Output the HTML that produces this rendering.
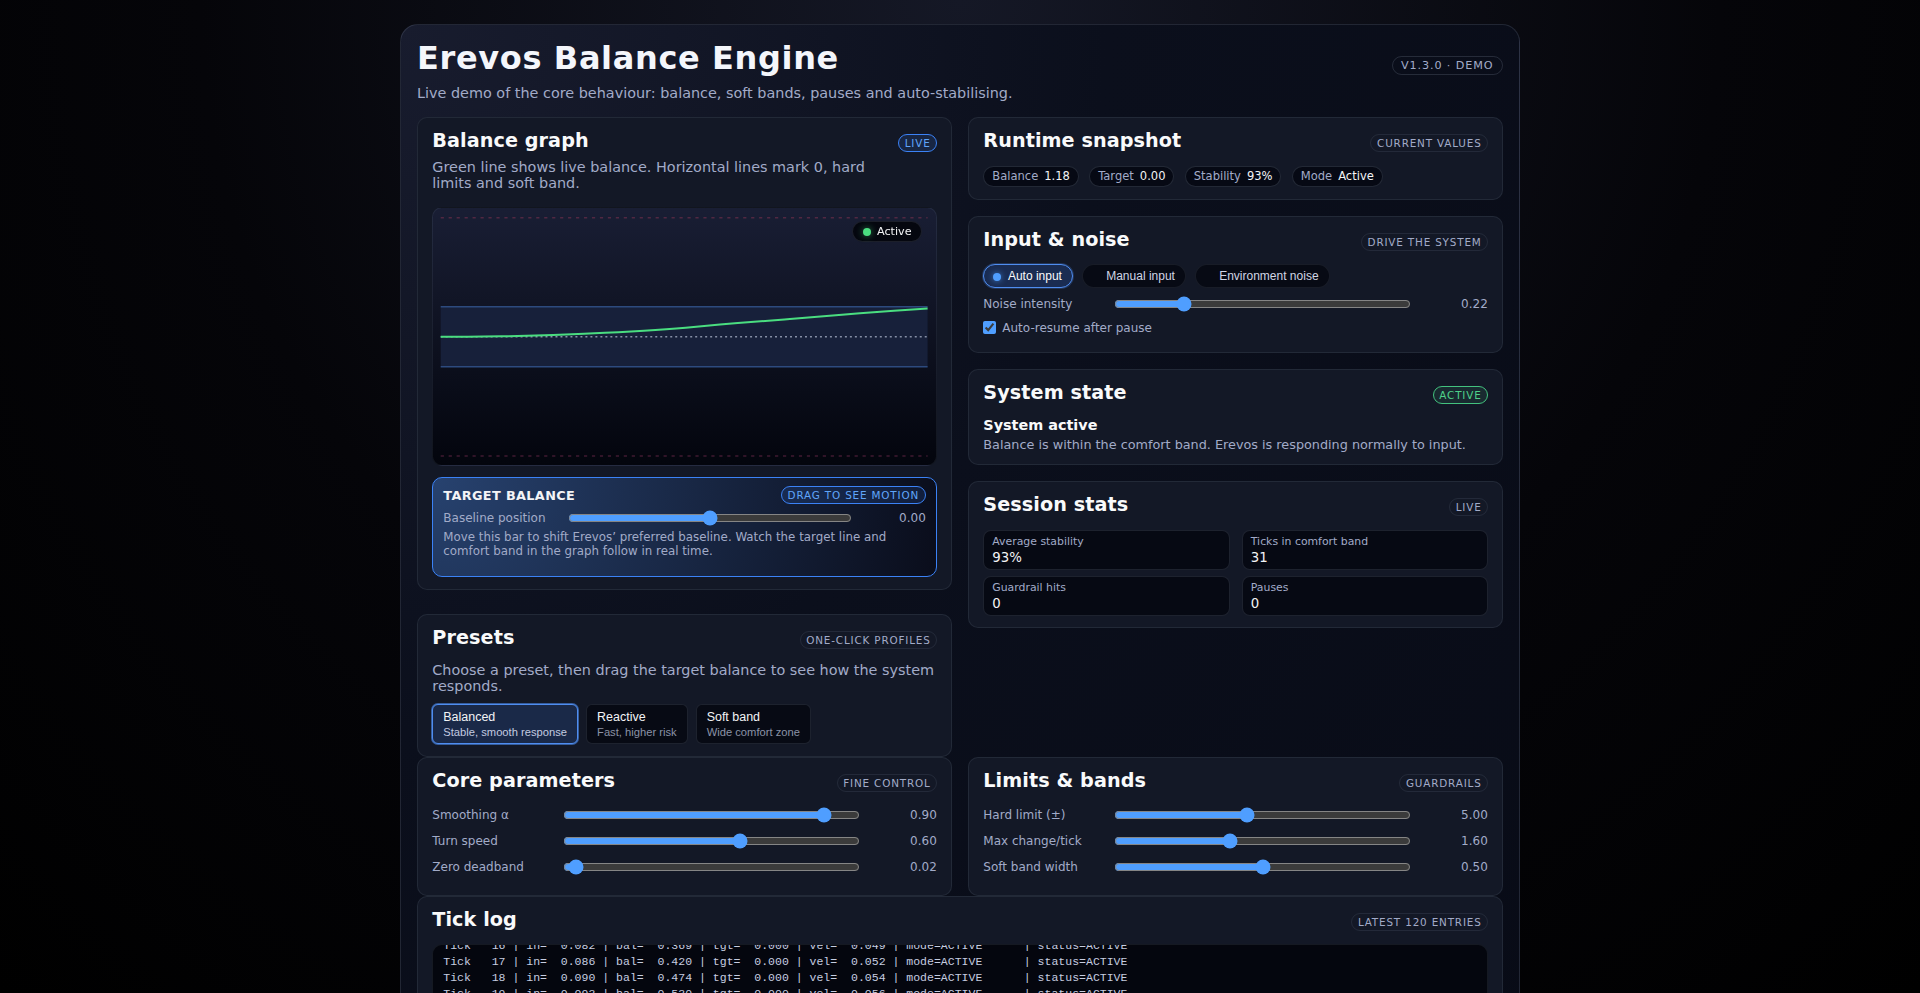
<!DOCTYPE html>
<html lang="en">
<head>
<meta charset="utf-8">
<title>Erevos Balance Engine</title>
<style>
:root{color-scheme:dark;}
*{box-sizing:border-box;}
html,body{margin:0;padding:0;}
body{
  width:1920px;height:993px;overflow:hidden;position:relative;
  font-family:"DejaVu Sans","Liberation Sans",sans-serif;
  color:#e5e7eb;
  background:radial-gradient(circle at 50% 0%, #151826 0, #050509 55%, #000 100%);
}
.app{
  position:absolute;left:400px;top:24px;width:1120px;height:1100px;
  border-radius:18px;border:1px solid rgba(148,163,184,0.18);
  background:radial-gradient(circle at 0% 0%, #181c2e 0, #0b0f1c 45%, #080b16 100%);
}
h1{position:absolute;left:16px;top:14px;margin:0;font-size:32px;font-weight:700;letter-spacing:0.02em;line-height:38px;color:#f4f6fb;white-space:nowrap;}
.sub{position:absolute;left:16px;top:59px;margin:0;font-size:14.4px;line-height:18px;color:#a2abc8;white-space:nowrap;}
.badge{
  display:inline-block;font-size:10.4px;letter-spacing:0.08em;text-transform:uppercase;
  padding:2px 5.7px;border-radius:999px;border:1px solid rgba(148,163,184,0.13);color:#a2abc8;line-height:12.1px;white-space:nowrap;
}
.badge.blue{border-color:#3b82f6;color:#60a5fa;background:rgba(59,130,246,0.14);}
.badge.green{border-color:#43c27e;color:#4fd18b;background:rgba(79,209,139,0.10);}
.ver{position:absolute;right:16.5px;top:30.8px;font-size:11.2px;padding:2px 8px;line-height:13.2px;border-color:rgba(148,163,184,0.2);}
.card{
  position:absolute;border-radius:10px;border:1px solid rgba(148,163,184,0.12);
  background:#131826;padding:11px 14px 14px;
}
.card h2{margin:0;font-size:19.2px;font-weight:700;line-height:23px;letter-spacing:0.08px;color:#f9fafb;white-space:nowrap;}
.card .hd{display:flex;justify-content:space-between;align-items:flex-start;height:26px;}
.card .hd .badge{margin-top:4.5px;}
.desc{margin:4px 0 0;font-size:14.4px;line-height:16px;color:#a2abc8;}
input[type=range]{accent-color:#4f9eff;margin:0;display:block;height:16px;}
input[type=checkbox]{accent-color:#4f9eff;margin:0;width:13px;height:13px;display:block;}
.row{display:flex;align-items:center;height:16px;font-size:12px;color:#a2abc8;}
.row .lbl{width:131px;flex:none;white-space:nowrap;}
.row input{width:297px;flex:none;}
.row .val{flex:1;text-align:right;color:#a2abc8;padding-right:0.5px;}
.rows .row{margin-top:10px;}
/* graph */
.gwrap{position:absolute;left:14px;top:88.4px;width:505px;height:259.6px;border-radius:10px;border:1px solid rgba(148,163,184,0.1);
  background:linear-gradient(180deg,#191e34 0%,#03050d 100%);overflow:hidden;}
.gwrap svg{position:absolute;left:0;top:0.85px;}
.gpill{position:absolute;right:14.4px;top:13.2px;height:21px;border-radius:999px;background:#05070f;transform:translateZ(0);border:1px solid rgba(148,163,184,0.16);padding:1.4px 9.3px 0 9.9px;font-size:11.2px;line-height:17.6px;color:#f3f4f6;display:flex;align-items:center;}
.gpill i{display:block;width:8px;height:8px;border-radius:50%;background:#4ade80;margin-right:5.7px;box-shadow:0 0 7px rgba(74,222,128,0.55);}
.tb{position:absolute;left:14px;top:358.75px;width:505px;height:100.1px;border-radius:10px;border:1px solid #3b82f6;
  background:radial-gradient(circle farthest-corner at 0% 0%, #27426f 0%, #0a0d1b 100%);padding:9.65px 10px 9px;}
.tb .t{font-size:12.8px;font-weight:700;letter-spacing:0.03em;color:#f3f4f6;text-transform:uppercase;line-height:16px;}
.tb .hd2{display:flex;justify-content:space-between;align-items:flex-start;height:17px;}
.tb .hd2 .badge{margin-top:-1.8px;margin-right:0.7px;padding:2px 5.6px;line-height:12.5px;}
.tb .t{margin-top:0.5px;}
.tb .row{margin-top:5.35px;}
.tb .row .lbl{width:125px;}
.tb .row input{width:284px;}
.tb .help{margin:4px 0 0;font-size:11.84px;line-height:14px;color:#a2abc8;}
/* presets */
.pbtns{display:flex;gap:8px;margin-top:10px;}
.pbtn{font-family:"Liberation Sans",sans-serif;border:1px solid rgba(148,163,184,0.16);background:#070a14;border-radius:6px;padding:4px 10px 4px;height:40px;color:#e5e7eb;}
.pbtn b{display:block;font-weight:400;font-size:12.48px;line-height:16px;color:#f3f4f6;}
.pbtn span{display:block;font-size:11.2px;line-height:14px;color:#8b93a7;white-space:nowrap;}
.pbtn.on{border:1px solid #4f8df0;box-shadow:0 0 0 1px rgba(79,141,240,0.6);background:#1a2948;}
.pbtn.on span{color:#c3cbe0;}
/* chips */
.chips{display:flex;gap:10.3px;margin-top:10.25px;}
.chip{height:21px;border-radius:999px;background:#060914;border:1px solid rgba(148,163,184,0.2);padding:0 8px;font-size:11.52px;line-height:19px;color:#a2abc8;white-space:nowrap;}
.chip b{font-weight:400;color:#f3f4f6;margin-left:6px;}
.modes{display:flex;gap:8.5px;margin-top:10px;}
.mode{font-family:"Liberation Sans",sans-serif;height:23.8px;border-radius:999px;background:#070a14;border:1px solid rgba(148,163,184,0.12);padding:1px 10.2px 0 9.2px;font-size:12px;line-height:21.8px;color:#d1d5e4;display:flex;align-items:center;white-space:nowrap;}
.mode i{display:block;width:8px;height:8px;border-radius:50%;margin-right:6.4px;background:transparent;}
.mode.on{background:#1a2c52;border:1px solid #4f8df0;box-shadow:0 0 0 1px rgba(79,141,240,0.25);color:#f9fafb;}
.mode.on i{background:#4f9eff;box-shadow:0 0 6px rgba(79,158,255,0.7);}
.chk{display:flex;align-items:center;margin-top:7.7px;font-size:12px;color:#a2abc8;height:16px;}
.chk input{margin-right:6px;}
.stats{display:grid;grid-template-columns:1fr 1fr;gap:6px 12px;margin-top:10.3px;}
.stat{height:40px;border-radius:8px;background:#060913;border:1px solid rgba(148,163,184,0.17);padding:4px 8px;}
.stat .l{font-size:10.88px;line-height:14px;color:#a2abc8;}
.stat .v{font-size:13.3px;line-height:16px;color:#f3f4f6;margin-top:1px;}
.log{position:absolute;left:14px;top:47px;width:1056px;height:200px;border-radius:10px;background:#04060e;border:1px solid rgba(148,163,184,0.12);overflow:hidden;}
.log pre{margin:0;position:absolute;left:10px;top:-7px;font-family:"Liberation Mono","DejaVu Sans Mono",monospace;font-size:11.52px;line-height:16px;color:#c6cde0;}
</style>
</head>
<body>
<div class="app">
  <h1>Erevos Balance Engine</h1>
  <p class="sub">Live demo of the core behaviour: balance, soft bands, pauses and auto-stabilising.</p>
  <span class="badge ver">v1.3.0 · demo</span>
  <div style="position:absolute;left:0.3px;top:0.25px;">

  <div class="card" id="c-graph" style="left:16px;top:92px;width:535px;height:473px;">
    <div class="hd"><h2>Balance graph</h2><span class="badge blue">Live</span></div>
    <p class="desc" style="width:460px">Green line shows live balance. Horizontal lines mark 0, hard limits and soft band.</p>
    <div class="gwrap">
      <svg width="503" height="257" viewBox="0 0 503 257">
        <line x1="7.7" y1="9.75" x2="494.6" y2="9.75" stroke="#6a2d48" stroke-opacity="0.7" stroke-width="1.5" stroke-dasharray="3.2 4.76"/>
        <line x1="7.7" y1="248.0" x2="494.6" y2="248.0" stroke="#5a2440" stroke-opacity="0.7" stroke-width="1.5" stroke-dasharray="3.2 4.76"/>
        <rect x="7.7" y="98.8" width="486.9" height="59.9" fill="#17203a"/>
        <line x1="7.7" y1="98.8" x2="494.6" y2="98.8" stroke="#2d4a7e" stroke-width="1.6"/>
        <line x1="7.7" y1="158.7" x2="494.6" y2="158.7" stroke="#2d4a7e" stroke-width="1.6"/>
        <line x1="7.7" y1="128.75" x2="494.6" y2="128.75" stroke="#9aa3b8" stroke-opacity="0.85" stroke-width="1.5" stroke-dasharray="2 2.99"/>
        <path d="M7.70 128.75 C14.75 128.72 35.65 128.75 50.00 128.60 C64.35 128.45 79.98 128.19 93.80 127.85 C107.62 127.51 119.87 127.05 132.90 126.55 C145.93 126.05 158.98 125.50 172.00 124.85 C185.02 124.20 197.55 123.52 211.00 122.65 C224.45 121.78 237.07 120.92 252.70 119.65 C268.33 118.38 287.43 116.50 304.80 115.05 C322.17 113.60 339.54 112.35 356.90 110.95 C374.26 109.55 391.60 108.02 408.95 106.65 C426.30 105.28 446.73 103.77 461.00 102.75 C475.27 101.73 489.00 100.92 494.60 100.55" fill="none" stroke="#4ade80" stroke-width="2" stroke-linejoin="round" stroke-linecap="butt"/>
      </svg>
      <div class="gpill"><i></i>Active</div>
    </div>
    <div class="tb">
      <div class="hd2"><span class="t">Target balance</span><span class="badge blue">Drag to see motion</span></div>
      <div class="row"><span class="lbl">Baseline position</span><input type="range" min="-5" max="5" step="0.01" value="0"><span class="val">0.00</span></div>
      <p class="help">Move this bar to shift Erevos’ preferred baseline. Watch the target line and comfort band in the graph follow in real time.</p>
    </div>
  </div>

  <div class="card" id="c-presets" style="left:16px;top:589px;width:535px;height:142.75px;">
    <div class="hd"><h2>Presets</h2><span class="badge">One-click profiles</span></div>
    <p class="desc" style="margin-top:10px">Choose a preset, then drag the target balance to see how the system responds.</p>
    <div class="pbtns">
      <div class="pbtn on"><b>Balanced</b><span>Stable, smooth response</span></div>
      <div class="pbtn"><b>Reactive</b><span>Fast, higher risk</span></div>
      <div class="pbtn"><b>Soft band</b><span>Wide comfort zone</span></div>
    </div>
  </div>

  <div class="card" id="c-core" style="left:16px;top:731.65px;width:535px;height:139.2px;">
    <div class="hd"><h2>Core parameters</h2><span class="badge" style="margin-top:5.2px">Fine control</span></div>
    <div class="rows" style="margin-top:11.65px">
      <div class="row"><span class="lbl">Smoothing α</span><input type="range" min="0" max="1" step="0.01" value="0.9"><span class="val">0.90</span></div>
      <div class="row"><span class="lbl">Turn speed</span><input type="range" min="0" max="1" step="0.01" value="0.6"><span class="val">0.60</span></div>
      <div class="row"><span class="lbl">Zero deadband</span><input type="range" min="0" max="1" step="0.001" value="0.018"><span class="val">0.02</span></div>
    </div>
  </div>

  <div class="card" id="c-run" style="left:567px;top:92px;width:535px;height:83px;">
    <div class="hd"><h2>Runtime snapshot</h2><span class="badge">Current values</span></div>
    <div class="chips">
      <span class="chip">Balance<b>1.18</b></span><span class="chip">Target<b>0.00</b></span><span class="chip">Stability<b>93%</b></span><span class="chip">Mode<b>Active</b></span>
    </div>
  </div>

  <div class="card" id="c-input" style="left:567px;top:191px;width:535px;height:137px;">
    <div class="hd"><h2>Input &amp; noise</h2><span class="badge">Drive the system</span></div>
    <div class="modes">
      <div class="mode on"><i></i>Auto input</div><div class="mode"><i></i>Manual input</div><div class="mode"><i></i>Environment noise</div>
    </div>
    <div class="row" style="margin-top:8px"><span class="lbl">Noise intensity</span><input type="range" min="0" max="1" step="0.01" value="0.22"><span class="val">0.22</span></div>
    <div class="chk"><input type="checkbox" checked>Auto-resume after pause</div>
  </div>

  <div class="card" id="c-state" style="left:567px;top:344px;width:535px;height:96px;">
    <div class="hd"><h2>System state</h2><span class="badge green">Active</span></div>
    <div style="margin-top:9px;font-size:14.4px;font-weight:700;line-height:18px;color:#f9fafb">System active</div>
    <div style="margin-top:3px;font-size:12.8px;line-height:16px;color:#a2abc8">Balance is within the comfort band. Erevos is responding normally to input.</div>
  </div>

  <div class="card" id="c-stats" style="left:567px;top:456px;width:535px;height:147px;">
    <div class="hd"><h2>Session stats</h2><span class="badge">Live</span></div>
    <div class="stats">
      <div class="stat"><div class="l">Average stability</div><div class="v">93%</div></div>
      <div class="stat"><div class="l">Ticks in comfort band</div><div class="v">31</div></div>
      <div class="stat"><div class="l">Guardrail hits</div><div class="v">0</div></div>
      <div class="stat"><div class="l">Pauses</div><div class="v">0</div></div>
    </div>
  </div>

  <div class="card" id="c-limits" style="left:567px;top:731.65px;width:535px;height:139.2px;">
    <div class="hd"><h2>Limits &amp; bands</h2><span class="badge" style="margin-top:5.2px">Guardrails</span></div>
    <div class="rows" style="margin-top:11.65px">
      <div class="row"><span class="lbl">Hard limit (±)</span><input type="range" min="1" max="10" step="0.01" value="5"><span class="val">5.00</span></div>
      <div class="row"><span class="lbl">Max change/tick</span><input type="range" min="0.1" max="4" step="0.01" value="1.6"><span class="val">1.60</span></div>
      <div class="row"><span class="lbl">Soft band width</span><input type="range" min="0" max="1" step="0.01" value="0.5"><span class="val">0.50</span></div>
    </div>
  </div>

  <div class="card" id="c-log" style="left:16px;top:871px;width:1086px;height:300px;">
    <div class="hd"><h2>Tick log</h2><span class="badge">Latest 120 entries</span></div>
    <div class="log"><pre>Tick   16 | in=  0.082 | bal=  0.369 | tgt=  0.000 | vel=  0.049 | mode=ACTIVE      | status=ACTIVE
Tick   17 | in=  0.086 | bal=  0.420 | tgt=  0.000 | vel=  0.052 | mode=ACTIVE      | status=ACTIVE
Tick   18 | in=  0.090 | bal=  0.474 | tgt=  0.000 | vel=  0.054 | mode=ACTIVE      | status=ACTIVE
Tick   19 | in=  0.093 | bal=  0.530 | tgt=  0.000 | vel=  0.056 | mode=ACTIVE      | status=ACTIVE
Tick   20 | in=  0.097 | bal=  0.588 | tgt=  0.000 | vel=  0.058 | mode=ACTIVE      | status=ACTIVE</pre></div>
  </div>
</div>
</div>
</body>
</html>
